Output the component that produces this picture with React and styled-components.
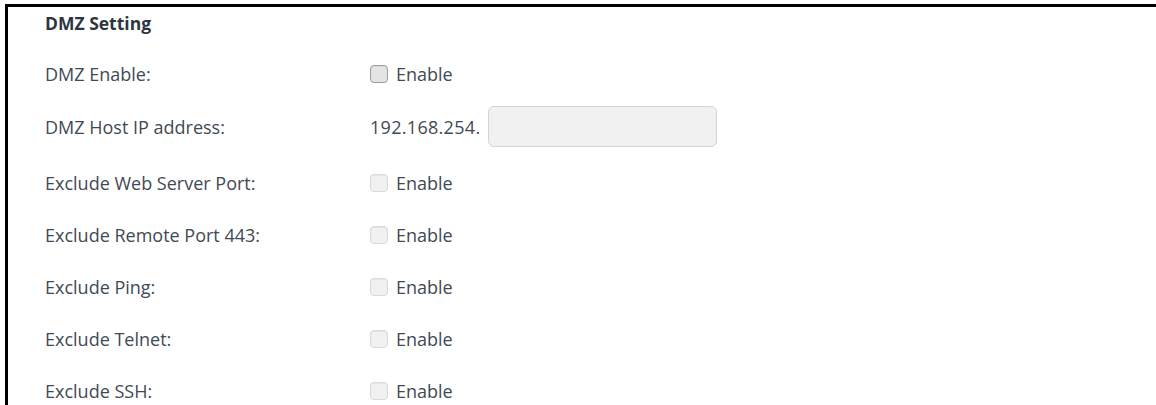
import styled, { createGlobalStyle } from "styled-components"

const GlobalStyle = createGlobalStyle`
  html, body {
    margin: 0;
    padding: 0;
    background: #fff;
  }
  body {
    font-family: "Open Sans", "Liberation Sans", sans-serif;
    font-size: 18px;
    color: #414a54;
  }
`

const Panel = styled.div`
  margin: 4px 0 0 5px;
  border-top: 3px solid #000;
  border-left: 3px solid #000;
  padding: 0 0 0 37px;
  min-height: 398px;
  box-sizing: border-box;
`

const Title = styled.div`
  font-weight: 700;
  font-size: 17.5px;
  color: #2c3540;
  height: 33px;
  line-height: 33px;
  margin-bottom: 8px;
`

const Row = styled.div`
  display: flex;
  align-items: center;
  height: ${p => p.$h || 52}px;
  padding-bottom: ${p => p.$pb || 0}px;
  box-sizing: border-box;
`

const Label = styled.div`
  width: 325px;
  flex-shrink: 0;
`

const Field = styled.label`
  display: flex;
  align-items: center;
  gap: 8px;
`

const Box = styled.span`
  width: 18px;
  height: 18px;
  border-radius: 4px;
  box-sizing: border-box;
  border: 1px solid ${p => (p.$disabled ? "#d9d9d9" : "#9c9c9c")};
  background: ${p => (p.$disabled ? "#f1f1f1" : "#e4e4e4")};
  box-shadow: inset 0 1px 1px rgba(0, 0, 0, 0.05);
`

const IpPrefix = styled.span`
  letter-spacing: 0.3px;
`

const HostInput = styled.input`
  width: 229px;
  height: 41px;
  box-sizing: border-box;
  margin-left: 8px;
  border: 1px solid #d4d4d4;
  border-radius: 6px;
  background: #f1f1f1;
  outline: none;
`

const rows = [
  "Exclude Web Server Port:",
  "Exclude Remote Port 443:",
  "Exclude Ping:",
  "Exclude Telnet:",
  "Exclude SSH:",
]

const EnableBox = ({ disabled }) => (
  <Field>
    <Box $disabled={disabled} />
    <span>Enable</span>
  </Field>
)

const App = () => (
  <>
    <GlobalStyle />
    <Panel>
      <Title>DMZ Setting</Title>
      <Row>
        <Label>DMZ Enable:</Label>
        <EnableBox />
      </Row>
      <Row $h={57} $pb={4}>
        <Label>DMZ Host IP address:</Label>
        <IpPrefix>192.168.254.</IpPrefix>
        <HostInput />
      </Row>
      {rows.map(label => (
        <Row key={label}>
          <Label>{label}</Label>
          <EnableBox disabled />
        </Row>
      ))}
    </Panel>
  </>
)

export default App
